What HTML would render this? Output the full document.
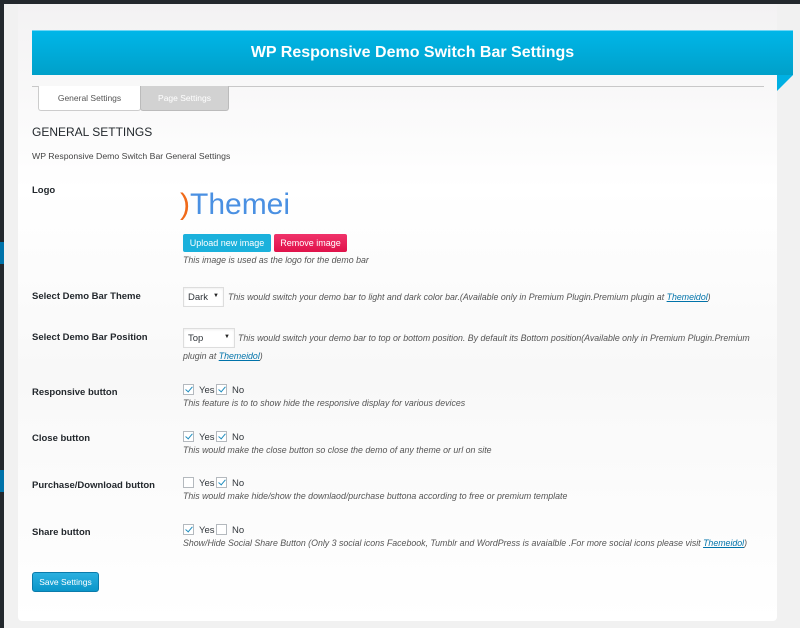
<!DOCTYPE html>
<html><head><meta charset="utf-8"><style>
*{margin:0;padding:0;box-sizing:border-box}
body{width:800px;height:628px;background:#f1f1f1;font-family:"Liberation Sans",sans-serif;color:#32373c;position:relative;overflow:hidden}
.a{position:absolute;white-space:nowrap}
.lbl{font-size:9.5px;font-weight:bold;color:#23282d;left:32px}
.note{font-size:8.8px;font-style:italic;color:#555}
.cb{position:absolute;width:11px;height:11px;border:1px solid #b4b9be;background:#fff}
.cb.c::after{content:"";position:absolute;left:3px;top:0px;width:3px;height:6px;border:solid #1e8cbe;border-width:0 1.5px 1.5px 0;transform:rotate(40deg)}
.opt{font-size:9.5px;color:#32373c}
a{color:#0073aa;text-decoration:underline}
.sel{position:absolute;border:1px solid #ddd;background:#fff;font-size:9.5px;padding:4px 4px;box-shadow:inset 0 1px 2px rgba(0,0,0,.07)}
.sel::after{content:"▼";position:absolute;right:4px;top:5px;font-size:6px;color:#222}
</style></head><body>
<div class="a" style="left:0;top:0;width:800px;height:4px;background:#23282d"></div>
<div class="a" style="left:0;top:0;width:4px;height:628px;background:#23282d"></div>
<div class="a" style="left:0;top:242px;width:4px;height:22px;background:#0073aa"></div>
<div class="a" style="left:0;top:470px;width:4px;height:22px;background:#0073aa"></div>
<div class="a" style="left:18px;top:4px;width:759px;height:617px;background:linear-gradient(#f3f2f3,#fff 30%,#f8f8f8 60%,#fff);border-radius:0 0 4px 4px"></div>
<div class="a" style="left:32px;top:30px;width:761px;height:45px;background:linear-gradient(#00b6e8,#00a0c9);border-top:1px solid #6fd6f5"></div>
<div class="a" style="left:777px;top:75px;width:0;height:0;border-top:16px solid #00b0e3;border-right:16px solid transparent"></div>
<div class="a" style="left:32px;top:44px;width:761px;text-align:center;color:#fff;font-size:16px;font-weight:bold">WP Responsive Demo Switch Bar Settings</div>
<div class="a" style="left:32px;top:86px;width:732px;height:1px;background:#c8c8c8"></div>
<div class="a" style="left:38px;top:86px;width:103px;height:25px;background:#fff;border:1px solid #ccc;border-top:none;border-radius:0 0 3px 3px;font-size:8.5px;color:#555;text-align:center;line-height:25px">General Settings</div>
<div class="a" style="left:140px;top:86px;width:89px;height:25px;background:#d2d2d2;border:1px solid #bbb;border-top:none;border-radius:0 0 3px 3px;font-size:8.5px;color:#fff;text-align:center;line-height:25px">Page Settings</div>
<div class="a" style="left:32px;top:125px;font-size:12px;color:#23282d">GENERAL SETTINGS</div>
<div class="a" style="left:32px;top:151px;font-size:8.7px;color:#444">WP Responsive Demo Switch Bar General Settings</div>

<div class="a lbl" style="top:185px">Logo</div>
<div class="a" style="left:180px;top:188px;font-size:30px;color:#4a90e2;letter-spacing:0px"><span style="color:#f06a1a;font-size:30px">)</span>Themei</div>
<div class="a" style="left:183px;top:234px;width:88px;height:18px;background:#1bb1dc;color:#fff;font-size:9px;text-align:center;line-height:18px;border-radius:2px">Upload new image</div>
<div class="a" style="left:274px;top:234px;width:73px;height:18px;background:linear-gradient(#f0336a,#e0124a);color:#fff;font-size:9px;text-align:center;line-height:18px;border-radius:2px">Remove image</div>
<div class="a note" style="left:183px;top:255px">This image is used as the logo for the demo bar</div>

<div class="a lbl" style="top:291px">Select Demo Bar Theme</div>
<div class="sel" style="left:183px;top:287px;width:41px;height:20px">Dark</div>
<div class="a note" style="left:228px;top:292px">This would switch your demo bar to light and dark color bar.(Available only in Premium Plugin.Premium plugin at <a>Themeidol</a>)</div>

<div class="a lbl" style="top:332px">Select Demo Bar Position</div>
<div class="sel" style="left:183px;top:328px;width:52px;height:20px">Top</div>
<div class="a note" style="left:238px;top:333px">This would switch your demo bar to top or bottom position. By default its Bottom position(Available only in Premium Plugin.Premium</div>
<div class="a note" style="left:183px;top:351px">plugin at <a>Themeidol</a>)</div>

<div class="a lbl" style="top:387px">Responsive button</div>
<div class="cb c" style="left:183px;top:384px"></div><div class="a opt" style="left:199px;top:385px">Yes</div>
<div class="cb c" style="left:216px;top:384px"></div><div class="a opt" style="left:232px;top:385px">No</div>
<div class="a note" style="left:183px;top:398px">This feature is to to show hide the responsive display for various devices</div>

<div class="a lbl" style="top:433px">Close button</div>
<div class="cb c" style="left:183px;top:431px"></div><div class="a opt" style="left:199px;top:432px">Yes</div>
<div class="cb c" style="left:216px;top:431px"></div><div class="a opt" style="left:232px;top:432px">No</div>
<div class="a note" style="left:183px;top:445px">This would make the close button so close the demo of any theme or url on site</div>

<div class="a lbl" style="top:480px">Purchase/Download button</div>
<div class="cb" style="left:183px;top:477px"></div><div class="a opt" style="left:199px;top:478px">Yes</div>
<div class="cb c" style="left:216px;top:477px"></div><div class="a opt" style="left:232px;top:478px">No</div>
<div class="a note" style="left:183px;top:491px">This would make hide/show the downlaod/purchase buttona according to free or premium template</div>

<div class="a lbl" style="top:527px">Share button</div>
<div class="cb c" style="left:183px;top:524px"></div><div class="a opt" style="left:199px;top:525px">Yes</div>
<div class="cb" style="left:216px;top:524px"></div><div class="a opt" style="left:232px;top:525px">No</div>
<div class="a note" style="left:183px;top:538px">Show/Hide Social Share Button (Only 3 social icons Facebook, Tumblr and WordPress is avaialble .For more social icons please visit <a>Themeidol</a>)</div>

<div class="a" style="left:32px;top:572px;width:67px;height:20px;background:linear-gradient(#2bb0e0,#0a96c9);border:1px solid #0a7bab;border-radius:3px;color:#fff;font-size:8.5px;text-align:center;line-height:18px">Save Settings</div>
</body></html>
